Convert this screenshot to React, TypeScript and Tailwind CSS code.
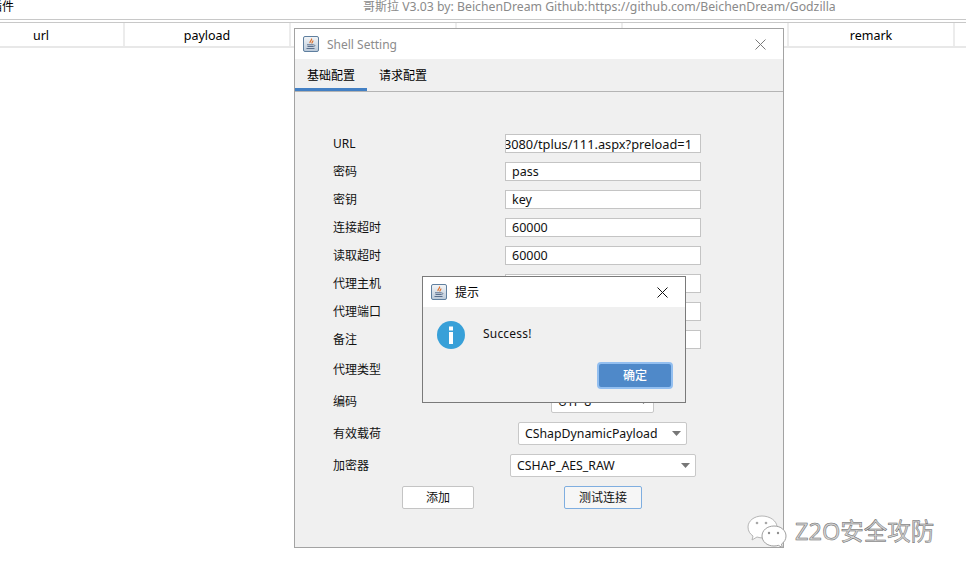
const font = { fontFamily: '"Noto Sans", "Noto Sans CJK SC", sans-serif' };

function JavaIcon() {
  return (
    <svg width="16" height="16" viewBox="0 0 16 16" className="shrink-0">
      <defs>
        <linearGradient id="jb" x1="0" y1="0" x2="0" y2="1">
          <stop offset="0" stopColor="#f4f6f8" />
          <stop offset="1" stopColor="#b9c8d8" />
        </linearGradient>
      </defs>
      <rect x="0.5" y="0.5" width="15" height="15" rx="1.5" fill="url(#jb)" stroke="#5f7f9f" />
      <path d="M8.5 2.5c1 1.5-2 2.5-1.5 4.5M9.8 4.5c.6 1-1.4 1.6-.8 3" fill="none" stroke="#e0702a" strokeWidth="1.2" />
      <path d="M4 8.8h6.5M4.5 10.5h5.5M3.5 12.5h8" fill="none" stroke="#5a6f8c" strokeWidth="1" />
      <path d="M10.5 8.8c2 0 2 1.7-.5 1.8" fill="none" stroke="#5a6f8c" strokeWidth="0.8" />
    </svg>
  );
}

function CloseIcon({ color, size }: { color: string; size: number }) {
  return (
    <svg width={size} height={size} viewBox="0 0 11 11" className="shrink-0">
      <path d="M0.5 0.5L10.5 10.5M10.5 0.5L0.5 10.5" stroke={color} strokeWidth="1" fill="none" />
    </svg>
  );
}

function Field({ label, value, clip }: { label: string; value: string; clip?: boolean }) {
  return (
    <div className="flex h-[19px] items-center">
      <div className="w-[172px] shrink-0">{label}</div>
      <div className="flex h-[19px] w-[196px] items-center justify-end overflow-hidden border border-[#c4c4c4] bg-white pl-[6px] pr-[8px] pt-px text-[12.5px]">
        <span className={clip ? "whitespace-nowrap text-[12.8px]" : "w-full whitespace-nowrap"}>{value}</span>
      </div>
    </div>
  );
}

function Combo({ label, value, box }: { label: string; value: string; box: string }) {
  return (
    <div className="flex h-[23px] items-center">
      <div className="w-[172px] shrink-0">{label}</div>
      <div className="flex w-[196px] justify-start">
        <div className={`flex h-[23px] ${box} items-center justify-between rounded-[2px] border border-[#c8c8c8] bg-white pl-[6px] pr-[5px] text-[12.3px]`}>
          <span className="whitespace-nowrap pt-px">{value}</span>
          <svg width="9" height="5" viewBox="0 0 9 5" className="shrink-0">
            <path d="M0 0H9L4.5 5Z" fill="#777777" />
          </svg>
        </div>
      </div>
    </div>
  );
}

const columns = ["url", "payload", "cryptor", "encoding", "proxy", "remark"];

export default function App() {
  return (
    <div className="relative h-[576px] w-[966px] overflow-hidden bg-white text-[12px] leading-none text-[#111]" style={font}>
      <div className="flex h-[19px] items-start pt-px">
        <span className="ml-[-10px] whitespace-nowrap text-black">插件</span>
        <span className="ml-[349px] whitespace-nowrap text-[12.25px] text-[#8a8a8a]">
          <span className="text-[12px]">哥斯拉</span> V3.03 by: BeichenDream Github:https://github.com/BeichenDream/Godzilla
        </span>
      </div>
      <div className="h-[4px] border-y border-[#c8c8c8]" />
      <div className="flex h-[25px] items-center border-b-2 border-[#e8e8e8] pb-px">
        <div className="ml-[-41px] flex">
          {columns.map((c) => (
            <div key={c} className="flex h-[23px] w-[166px] shrink-0 items-center justify-center border-r-2 border-[#ececec] pt-[4px] text-[12.5px] text-black">
              {c}
            </div>
          ))}
        </div>
      </div>

      {/* Shell Setting window */}
      <div className="absolute left-[294px] top-[28px] flex h-[520px] w-[490px] flex-col border border-[#a3a3a3] bg-[#f0f0f0]">
        <div className="flex h-[30px] shrink-0 items-center bg-white pl-[8px] pr-[17px]">
          <JavaIcon />
          <span className="ml-[8px] pt-[2px] text-[#8c8c8c]">Shell Setting</span>
          <span className="ml-auto">
            <CloseIcon color="#7a7a7a" size={11} />
          </span>
        </div>
        <div className="flex h-[33px] shrink-0 border-b border-[#b4b4b4] text-black">
          <div className="flex w-[72px] items-center justify-center border-b-[3px] border-[#4380c4] pt-[5px]">基础配置</div>
          <div className="flex w-[72px] items-center justify-center pt-[2px]">请求配置</div>
        </div>
        <div className="flex flex-col gap-[9px] pl-[38px] pt-[42px]">
          <Field label="URL" value="3080/tplus/111.aspx?preload=1" clip />
          <Field label="密码" value="pass" />
          <Field label="密钥" value="key" />
          <Field label="连接超时" value="60000" />
          <Field label="读取超时" value="60000" />
          <Field label="代理主机" value="" />
          <Field label="代理端口" value="" />
          <Field label="备注" value="" />
          <Combo label="代理类型" value="NO_PROXY" box="ml-[35px] w-[125px]" />
          <Combo label="编码" value="UTF-8" box="ml-[46px] w-[103px]" />
          <Combo label="有效载荷" value="CShapDynamicPayload" box="ml-[13px] w-[169px]" />
          <Combo label="加密器" value="CSHAP_AES_RAW" box="ml-[5px] w-[186px]" />
          <div className="flex h-[23px] items-stretch">
            <div className="w-[172px] shrink-0 pl-[69px]">
              <div className="flex h-full w-[72px] items-center justify-center rounded-[2px] border border-[#c4c4c4] bg-white">添加</div>
            </div>
            <div className="flex w-[196px] justify-center">
              <div className="flex w-[78px] items-center justify-center rounded-[2px] border border-[#7faee0] bg-[#f6f6f6]">测试连接</div>
            </div>
          </div>
        </div>
      </div>

      {/* 提示 dialog */}
      <div className="absolute left-[422px] top-[276px] flex h-[127px] w-[264px] flex-col border border-[#7a7a7a] bg-[#f0f0f0]">
        <div className="flex h-[30px] shrink-0 items-center bg-white pl-[8px] pr-[17px] text-black">
          <JavaIcon />
          <span className="ml-[8px] pt-[2px]">提示</span>
          <span className="ml-auto">
            <CloseIcon color="#111111" size={11} />
          </span>
        </div>
        <div className="flex items-start pl-[14px] pt-[14px]">
          <svg width="28" height="28" viewBox="0 0 28 28" className="shrink-0">
            <circle cx="14" cy="14" r="14" fill="#38a0d8" />
            <rect x="12" y="5.5" width="4" height="4" fill="#ffffff" />
            <rect x="12" y="11" width="4" height="12" fill="#ffffff" />
          </svg>
          <span className="ml-[18px] mt-[7px] text-[12px] tracking-[0.2px]">Success!</span>
        </div>
        <div className="mt-[13px] flex justify-end pr-[12px]">
          <div className="flex h-[27px] w-[76px] items-center justify-center rounded-[4px] border-2 border-[#93bff0] bg-[#4f89c9] font-medium text-white">确定</div>
        </div>
      </div>

      {/* watermark */}
      <div className="absolute left-[747px] top-[515px] flex items-center">
        <svg width="40" height="34" viewBox="0 0 40 34" className="shrink-0">
          <path d="M15 1C7 1 1 6 1 12c0 4 2 7 5 9l-1 4 5-3c2 .6 4 1 6 1 8 0 14-5 14-11S23 1 15 1Z" fill="#ffffff" stroke="#b5b5b5" />
          <circle cx="10" cy="8" r="1.3" fill="#a8a8a8" />
          <circle cx="19" cy="8" r="1.3" fill="#a8a8a8" />
          <path d="M27 11c-7 0-12 4.500-12 10s5 10 12 10c1.500 0 3-.2 4.300-.7l4 2.200-.8-3.500c3-2 4.500-4.800 4.500-8 0-5.500-5-10-12-10Z" fill="#ffffff" stroke="#a0a0a0" />
          <circle cx="22" cy="18" r="1.200" fill="#909090" />
          <circle cx="31" cy="18" r="1.200" fill="#909090" />
        </svg>
        <span className="ml-[8px] whitespace-nowrap text-[23.5px] text-[#d4d4d4] [-webkit-text-stroke:0.5px_#666666]">Z2O安全攻防</span>
      </div>
    </div>
  );
}
